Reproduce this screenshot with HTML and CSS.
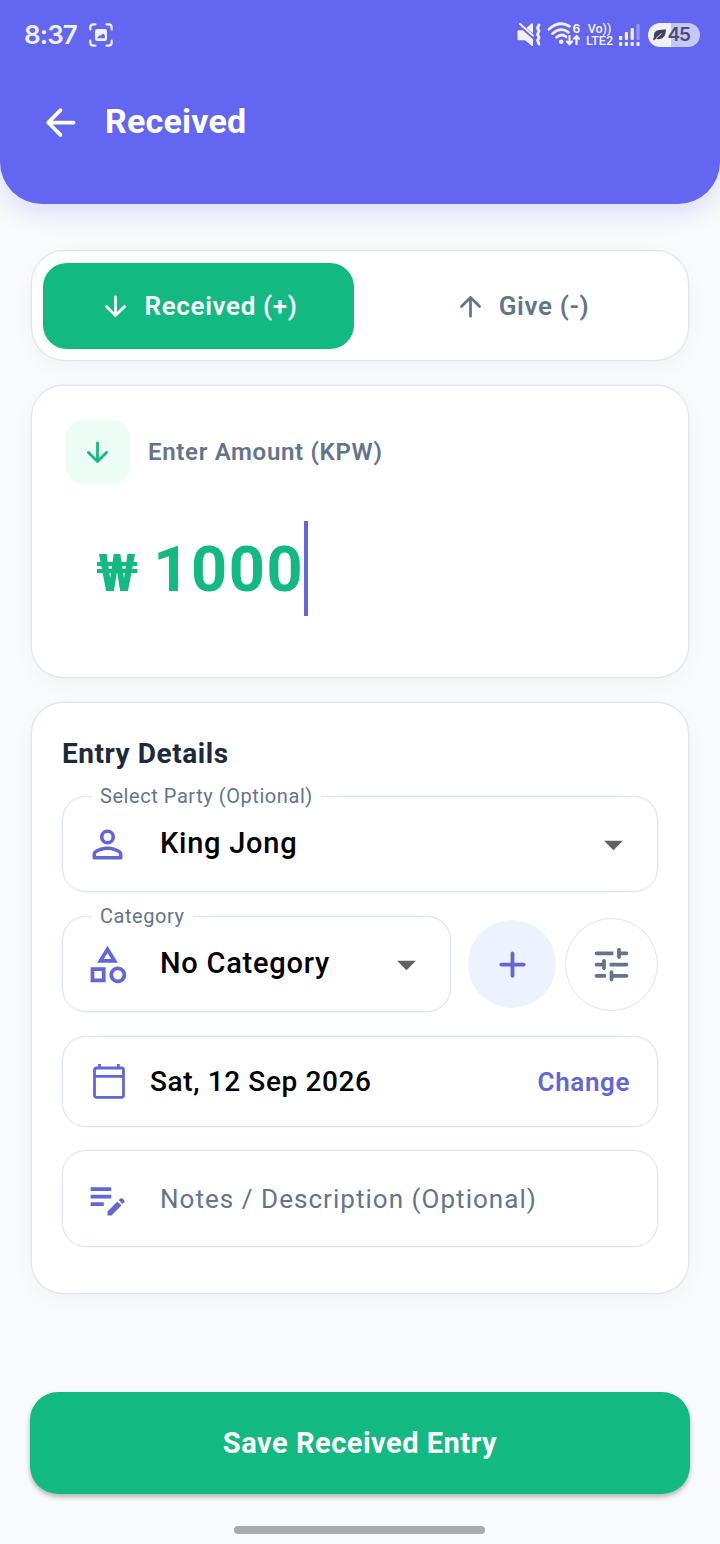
FILE: index.html
```html
<!DOCTYPE html>
<html lang="en">
<head>
<meta charset="utf-8">
<title>Received</title>
<link rel="stylesheet" href="styles.css">
</head>
<body>
<svg class="defs" width="0" height="0">
  <symbol id="arrow" viewBox="0 0 24 24"><path d="M19 11H7.83l4.88-4.88c.39-.39.39-1.03 0-1.42-.39-.39-1.02-.39-1.41 0l-6.59 6.59c-.39.39-.39 1.02 0 1.41l6.59 6.59c.39.39 1.02.39 1.41 0 .39-.39.39-1.02 0-1.41L7.83 13H19c.55 0 1-.45 1-1s-.45-1-1-1z"/></symbol>
  <symbol id="caret" viewBox="0 0 24 24"><path d="M7 10l5 5 5-5z"/></symbol>
</svg>
<div class="screen">
  <header class="header">
    <div class="status">
      <span class="clock">8:37</span>
      <svg class="shot" width="24" height="24" viewBox="0 0 24 24">
        <path fill="none" stroke="currentColor" stroke-width="2.2" stroke-linecap="round" d="M1.300 6.500V4.500q0-3.200 3.200-3.200H6.500M17.500 1.300h2q3.200 0 3.200 3.200v2M22.700 17.500v2q0 3.200-3.200 3.200h-2M6.500 22.700h-2q-3.200 0-3.200-3.200v-2"/>
        <path fill="currentColor" fill-rule="evenodd" d="M8 6h8Q18 6 18 8v7.500q0 2.500-2.500 2.500h-7Q6 18 6 15.500V8Q6 6 8 6zM8 15.300h7.800v-3.300l-1.800-1.500-2.500 2.300-1.200-.6z"/>
      </svg>
      <div class="status-right">
        <svg class="mute" width="25" height="25" viewBox="0 0 25 25">
          <path fill="currentColor" d="M1.500 8.200h4.200l10.300 9V24h-1L8 18.200H1.500Q.5 18.200.5 17.200V9.200Q.5 8.200 1.500 8.200zM9.500 6 14.500 1.500H16V11.500z"/>
          <path fill="none" stroke="currentColor" stroke-width="2" stroke-linecap="round" d="M3 2 16 13.500"/>
          <path fill="none" stroke="currentColor" stroke-width="2.900" stroke-linecap="round" stroke-linejoin="round" d="M22 3l-1.500 3 1.500 3-1.500 3.500 1.500 3-1.500 3 1.500 3.500"/>
        </svg>
        <svg class="wifi" width="34" height="26" viewBox="0 0 34 26">
          <g fill="none" stroke="currentColor" stroke-linecap="round">
            <path stroke-width="2.800" d="M1 7.200Q11-2 21.500 4.200M4.700 11.500Q12.500 4.500 20.500 10.300M8.500 15.300q5-4.300 9.500-.5"/>
            <path stroke-width="2.200" d="M21.500 14v7.500M19 19.500l2.500 2.700 2.500-2.700M28.500 22.200V14.500M26 16.700l2.500-2.700 2.500 2.700"/>
          </g>
          <circle cx="13.200" cy="19.800" r="2.300" fill="currentColor"/>
          <text class="wifi-gen" x="24.500" y="10.500">6</text>
        </svg>
        <div class="lte"><span>Vo))</span><span>LTE2</span></div>
        <svg class="signal" width="21" height="22" viewBox="0 0 21 22">
          <g fill="currentColor">
            <rect x="0" y="12" width="3.200" height="4"/><rect x="0" y="18" width="3.200" height="4" rx="1"/>
            <rect x="5.800" y="8" width="3.200" height="8" rx="1"/><rect x="5.800" y="18" width="3.200" height="4" rx="1"/>
            <rect x="11.600" y="4" width="3.200" height="12" rx="1"/><rect x="11.600" y="18" width="3.200" height="4" rx="1"/>
            <rect x="17.400" y="0" width="3.200" height="16" rx="1" opacity=".35"/><rect x="17.400" y="18" width="3.200" height="4" rx="1"/>
          </g>
        </svg>
        <div class="battery">
          <svg width="14" height="12" viewBox="0 0 14 12"><path fill="#43435c" d="M1 8Q0 2 6 1L13 .3Q13 9 7 10 4 10.500 3 9.500L1 11.500 0 10.500z"/><path fill="none" stroke="#f1f1fe" d="M3 9.500 8.500 4.500"/></svg>
          <span>45</span>
        </div>
      </div>
    </div>
    <div class="appbar">
      <svg class="icon back" width="45" height="45"><use href="#arrow"/></svg>
      <h1 class="title">Received</h1>
    </div>
  </header>

  <main class="content">
    <section class="card segmented">
      <button class="segment segment-on"><svg class="icon down" width="33" height="33"><use href="#arrow"/></svg><span>Received (+)</span></button>
      <button class="segment"><svg class="icon up" width="33" height="33"><use href="#arrow"/></svg><span>Give (-)</span></button>
    </section>

    <section class="card amount">
      <div class="amount-head">
        <div class="badge"><svg class="icon down" width="33" height="33"><use href="#arrow"/></svg></div>
        <span class="amount-label">Enter Amount (KPW)</span>
      </div>
      <div class="amount-row">
        <span class="currency">₩</span><span class="value">1000</span><span class="cursor"></span>
      </div>
    </section>

    <section class="card details">
      <h2 class="heading">Entry Details</h2>
      <div class="field">
        <span class="field-label">Select Party (Optional)</span>
        <svg class="icon lead" width="45" height="45" viewBox="0 0 24 24"><path d="M12 5.900a2.100 2.100 0 1 1 0 4.200 2.100 2.100 0 0 1 0-4.200m0 9c2.970 0 6.100 1.460 6.100 2.100v1.100H5.900V17c0-.64 3.130-2.100 6.100-2.100M12 4C9.790 4 8 5.790 8 8s1.790 4 4 4 4-1.790 4-4-1.790-4-4-4zm0 9c-2.670 0-8 1.340-8 4v2q0 1 1 1h14q1 0 1-1v-2c0-2.660-5.330-4-8-4z"/></svg>
        <span class="field-value choice">King Jong</span>
        <svg class="icon caret" width="45" height="45"><use href="#caret"/></svg>
      </div>
      <div class="category-row">
        <div class="field">
          <span class="field-label">Category</span>
          <svg class="icon lead" width="45" height="45" viewBox="0 0 24 24"><path d="M12 2l-5.500 9h11L12 2zm0 3.840L13.930 9h-3.870L12 5.840zM17.500 13c-2.490 0-4.500 2.010-4.500 4.500s2.010 4.500 4.500 4.500 4.500-2.010 4.500-4.500-2.010-4.500-4.500-4.500zm0 7a2.500 2.500 0 0 1 0-5 2.500 2.500 0 0 1 0 5zM3 21.500h8v-8H3v8zm2-6h4v4H5v-4z"/></svg>
          <span class="field-value choice">No Category</span>
          <svg class="icon caret" width="45" height="45"><use href="#caret"/></svg>
        </div>
        <button class="round add"><svg class="icon" width="45" height="45" viewBox="0 0 24 24"><path d="M18 13h-5v5c0 .55-.45 1-1 1s-1-.45-1-1v-5H6c-.55 0-1-.45-1-1s.45-1 1-1h5V6c0-.55.45-1 1-1s1 .45 1 1v5h5c.55 0 1 .45 1 1s-.45 1-1 1z"/></svg></button>
        <button class="round tune"><svg class="icon" width="45" height="45" viewBox="0 0 24 24"><path d="M3 18c0 .55.45 1 1 1h5v-2H4c-.55 0-1 .45-1 1zM3 6c0 .55.45 1 1 1h9V5H4c-.55 0-1 .45-1 1zm10 14v-1h7c.55 0 1-.45 1-1s-.45-1-1-1h-7v-1c0-.55-.45-1-1-1s-1 .45-1 1v4c0 .55.45 1 1 1s1-.45 1-1zM7 10v1H4c-.55 0-1 .45-1 1s.45 1 1 1h3v1c0 .55.45 1 1 1s1-.45 1-1v-4c0-.55-.45-1-1-1s-1 .45-1 1zm14 2c0-.55-.45-1-1-1h-9v2h9c.55 0 1-.45 1-1zm-5-3c.55 0 1-.45 1-1V7h3c.55 0 1-.45 1-1s-.45-1-1-1h-3V4c0-.55-.45-1-1-1s-1 .45-1 1v4c0 .55.45 1 1 1z"/></svg></button>
      </div>
      <div class="field date-field">
        <svg class="calendar" width="32" height="35" viewBox="0 0 32 35"><g fill="none" stroke="currentColor"><rect x="1.500" y="4" width="29" height="29.300" rx="2" stroke-width="2.800"/><path stroke-width="2.800" d="M1.500 12.300H30M6.500 0v4M25.300 0v4"/></g></svg>
        <span class="field-value date">Sat, 12 Sep 2026</span>
        <span class="change">Change</span>
      </div>
      <div class="field notes-field">
        <svg class="icon lead" width="45" height="45" viewBox="0 0 24 24"><path d="M3 10h11v2H3v-2zm0-2h11V6H3v2zm0 8h7v-2H3v2zm15.010-3.130.71-.71c.39-.39 1.020-.39 1.410 0l.71.71c.39.39.39 1.020 0 1.410l-.71.71-2.120-2.120zm-.71.71-5.300 5.300V21h2.120l5.300-5.300-2.120-2.120z"/></svg>
        <span class="placeholder">Notes / Description (Optional)</span>
      </div>
    </section>
  </main>

  <footer class="footer">
    <button class="save"><span>Save Received Entry</span></button>
    <div class="home"></div>
  </footer>
</div>
</body>
</html>
```
FILE: styles.css
```css
* { box-sizing: border-box; }
body { margin: 0; font-family: Roboto, "Liberation Sans", sans-serif; background: #f8fafc; }
button { border: 0; padding: 0; margin: 0; background: none; font: inherit; color: inherit; }
h1, h2 { margin: 0; }
span { white-space: nowrap; }
.defs { position: absolute; }
.icon { display: block; flex: none; fill: currentColor; }
.down { transform: rotate(-90deg); }
.up { transform: rotate(90deg); }

.screen { width: 720px; height: 1544px; display: flex; flex-direction: column; overflow: hidden; }

.header { height: 204px; flex: none; background: #6366f1; color: #fff; border-radius: 0 0 42px 42px; box-shadow: 0 8px 24px rgba(99, 102, 241, .2); }
.status { height: 70px; padding: 0 20px 0 24px; display: flex; align-items: center; color: #f1f1fe; }
.clock { font-family: Inter, sans-serif; font-size: 26px; font-weight: 600; line-height: 30px; width: 54px; letter-spacing: -.9px; }
.shot { margin-left: 11px; }
.status-right { margin-left: auto; display: flex; align-items: center; }
.mute { margin-right: 6px; margin-top: -2px; }
.wifi { margin-right: 4px; overflow: visible; }
.wifi-gen { font: 700 12px/14px Inter, sans-serif; fill: currentColor; }
.lte { width: 27px; margin-right: 6px; display: flex; flex-direction: column; align-items: center; font: 500 12.500px/12px Roboto, sans-serif; }
.signal { margin-right: 8px; }
.battery { width: 52px; height: 24px; border-radius: 12px; padding: 0 10px 0 5px; display: flex; align-items: center; justify-content: space-between; background: linear-gradient(90deg, #f1f1fe 23px, #c5c6fa 23px); color: #4c4d72; font: 600 19px/24px Inter, sans-serif; letter-spacing: -1px; }

.appbar { height: 104px; padding-left: 38px; display: flex; align-items: center; }
.title { margin: -2px 0 0 22px; font-size: 34px; font-weight: 700; line-height: 40px; letter-spacing: .2px; }

.content { padding: 46px 31px 0; display: flex; flex-direction: column; gap: 24px; }
.card { background: #fff; border: 1px solid #e0e6ee; border-radius: 32px; box-shadow: 0 0 0 .5px #e8edf3, 0 6px 22px rgba(0, 0, 0, .03); }

.segmented { height: 111px; padding: 12px 11px; display: flex; gap: 12px; border-radius: 34px; }
.segment { flex: 1; height: 86px; border-radius: 24px; display: flex; align-items: center; justify-content: center; gap: 12px; color: #64748b; font-size: 26px; font-weight: 600; line-height: 30px; letter-spacing: .65px; }
.segment-on { background: #12b981; color: #fff; }

.amount { height: 293px; padding: 34px; }
.amount-head { display: flex; align-items: center; gap: 18px; }
.badge { width: 64px; height: 64px; border-radius: 18px; background: #ecfdf5; color: #12b981; display: flex; align-items: center; justify-content: center; padding-right: 1px; }
.amount-label { font-size: 24px; font-weight: 600; letter-spacing: .69px; color: #64748b; }
.amount-row { height: 95px; margin: 37px 0 0 30px; display: flex; align-items: center; color: #12b981; font-weight: 700; }
.currency { font-size: 52px; line-height: 60px; margin: 11px 15px 0 0; }
.value { font-size: 63px; line-height: 72px; letter-spacing: 1.600px; margin-top: 3px; }
.cursor { width: 4px; height: 95px; background: #6366d8; }

.details { height: 592px; padding: 34px 30px 0; }
.heading { font-size: 28px; font-weight: 700; line-height: 34px; letter-spacing: .55px; color: #1e293b; margin-bottom: 25px; }
.field { position: relative; height: 96px; border: 1px solid #dfe5ec; border-radius: 24px; padding-left: 22px; display: flex; align-items: center; box-shadow: 0 0 0 .5px #edf0f5; }
.field-label { position: absolute; left: 29px; top: -13px; padding: 0 8px; background: #fff; color: #64748b; font-size: 20px; line-height: 24px; letter-spacing: .56px; }
.lead { color: #6366d8; }
.field-value { font-size: 29px; font-weight: 500; line-height: 36px; color: #000; }
.choice { margin: -2px 0 0 30px; letter-spacing: .75px; }
.caret { color: #616161; margin: 0 21px 0 auto; }
.category-row { display: flex; align-items: center; margin: 24px 0; }
.category-row .field { width: 389px; }
.round { border-radius: 50%; display: flex; align-items: center; justify-content: center; flex: none; }
.add { width: 88px; height: 88px; background: #eef2ff; color: #6366d8; margin-left: 17px; }
.tune { width: 93px; height: 93px; border: 1px solid #dfe5ec; color: #64748b; margin-left: 9px; }
.date-field { height: 91px; padding: 0 27px 0 30px; margin-bottom: 23px; }
.calendar { color: #6366d8; }
.date { margin-left: 25px; font-size: 28px; letter-spacing: .62px; }
.change { margin-left: auto; font-size: 26px; font-weight: 600; letter-spacing: .6px; color: #6366d8; }
.notes-field { height: 97px; }
.placeholder { margin-left: 30px; font-size: 26px; letter-spacing: 1.040px; color: #64748b; }

.footer { margin-top: auto; padding: 0 30px 10px; display: flex; flex-direction: column; align-items: center; gap: 32px; }
.save { width: 660px; height: 102px; border-radius: 28px; background: #12b981; color: #fff; font-size: 29px; font-weight: 700; letter-spacing: .5px; box-shadow: 0 3px 5px rgba(0, 0, 0, .28); }
.home { width: 251px; height: 8px; border-radius: 4px; background: #a9aaab; margin-right: 1px; }
```
